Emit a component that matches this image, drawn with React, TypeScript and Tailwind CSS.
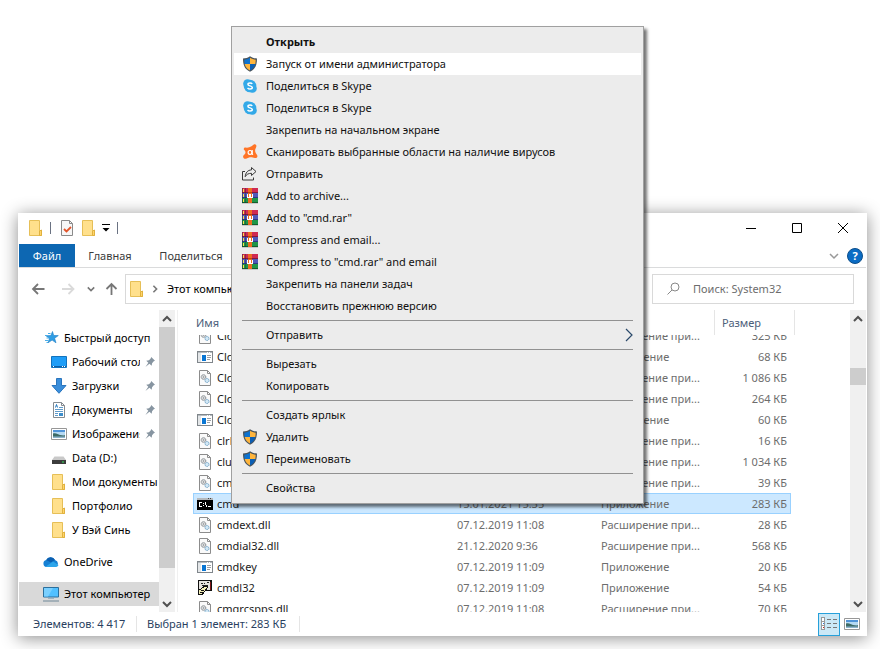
import React from 'react';
import clsx from 'clsx';

type IconProps = { className?: string };

const FolderIcon: React.FC<IconProps> = ({ className = 'w-4 h-4' }) => (
    <svg className={className} viewBox="0 0 16 16">
        <path d="M1.5.5h10v11h2v4h-12z" fill="#ffe08c" stroke="#e6bf57" />
        <path d="M11.5 15.5v-4.5l2-1v5.500z" fill="#ffd56b" stroke="#e0b13e" />
    </svg>
);

const CheckDocIcon = () => (
    <svg className="w-4 h-4" viewBox="0 0 16 16">
        <path d="M2.5.5h8l3 3v12h-11z" fill="#f7f7f7" stroke="#8a8a8a" />
        <path d="M10.5.5v3h3" fill="none" stroke="#8a8a8a" />
        <path d="M5 9l2.500 2.500L12 7" fill="none" stroke="#e2552b" strokeWidth="1.800" />
    </svg>
);

const ShieldIcon = () => (
    <svg className="w-4 h-4" viewBox="0 0 16 16">
        <path d="M8 .3C6 1.800 3.500 2.400 1 2.500c0 6 1.200 10.500 7 13.200 5.800-2.700 7-7.200 7-13.200C12.500 2.400 10 1.800 8 .3z" fill="#4a545c" />
        <path d="M8 1.800C6.300 2.900 4.400 3.500 2.300 3.700c0 1.500.2 2.900.4 4.300H8z" fill="#0f73cf" />
        <path d="M8 1.800c1.700 1.100 3.600 1.700 5.700 1.900 0 1.500-.2 2.900-.4 4.300H8z" fill="#ffb53c" />
        <path d="M2.700 8c.7 3 2.200 5 5.300 6.400V8z" fill="#ffb53c" />
        <path d="M13.300 8c-.7 3-2.200 5-5.300 6.400V8z" fill="#0b5fb5" />
    </svg>
);

const SkypeIcon = () => (
    <svg className="w-4 h-4" viewBox="0 0 16 16">
        <circle cx="5.500" cy="5.500" r="4.300" fill="#33a9e8" />
        <circle cx="10.500" cy="10.500" r="4.300" fill="#33a9e8" />
        <circle cx="8" cy="8" r="6.300" fill="#33a9e8" />
        <path d="M10.200 6C9.700 5.100 9 4.900 8 4.900c-1.200 0-2.100.5-2.100 1.400 0 2.200 4.400.9 4.400 3.300 0 .9-.9 1.500-2.200 1.500-1.100 0-2-.4-2.500-1.200" fill="none" stroke="#fff" strokeWidth="1.500" />
    </svg>
);

const AvastIcon = () => (
    <svg className="w-4 h-4" viewBox="0 0 16 16">
        <path d="M5 3.800C6.500 3.400 8 3 9.500 2.200L11.800.6c1.600-.8 3 .4 2.500 2.200L13.200 5.500c-.2 1.300 0 2.500.7 3.700l1.300 2c.8 1.700-.6 3.200-2.300 2.800-1.900-.4-3-1-4.900-.8-1.500.2-2.500 1-3.900 1.500-2 .6-3.700-1.400-2.700-3.100.7-1.100 2-1.800 2.100-3.200C3.600 7.200 2.600 6.600 2 5.800 1.300 4.600 2.200 3.300 3.500 3.500z" fill="#ff7426" />
        <circle cx="8" cy="8.400" r="1.900" fill="none" stroke="#fff" strokeWidth="1.200" />
        <path d="M10.200 6v3.600c0 .7.400.9.900.8" fill="none" stroke="#fff" strokeWidth="1.100" />
    </svg>
);

const ShareIcon = () => (
    <svg className="w-4 h-4" viewBox="0 0 16 16" fill="none" stroke="#3a3a3a">
        <path d="M3 5.500H.5v8.500h11v-2.500" />
        <path d="M9.500 1.500l4.500 4-4.500 4V7.300C6.500 7.300 4.500 8.300 3.200 10.700 3.500 7 5.500 4 9.500 3.900z" strokeLinejoin="round" />
    </svg>
);

const RarIcon = () => (
    <svg className="w-4 h-4" viewBox="0 0 16 16" shapeRendering="crispEdges">
        <path d="M0 0h16v5H0z" fill="#cf2a52" />
        <path d="M0 5h16v5H0z" fill="#5058b8" />
        <path d="M0 10h16v5H0z" fill="#1f9648" />
        <path d="M0 4h16v1H0z" fill="#86183a" />
        <path d="M0 9h16v1H0z" fill="#2f3785" />
        <path d="M0 14h16v1H0z" fill="#12602c" />
        <path d="M0 0h1v15H0zM3 0h1v15H3z" fill="#1d2a3a" opacity=".4" />
        <path d="M1 1h1v3H1zM1 6h1v3H1zM1 11h1v3H1z" fill="#ffe24a" />
        <path d="M6 0h4v15H6z" fill="#ee6b20" />
        <path d="M6 4h4v1H6z" fill="#b94412" />
        <path d="M5 6h1v3h1V6h2v3h1V6h1v4H5z" fill="#fff" />
        <path d="M0 15h16v1H0z" fill="#c9c9c9" />
    </svg>
);

const StarIcon = () => (
    <svg className="w-4 h-4" viewBox="0 0 16 16">
        <path d="M9.500 1.500l1.200 4 4.600.1-3.700 2.700 1.400 4.500-3.900-2.700L5 12.800l1.500-4.300L3 5.700l4.900-.2z" fill="#2f9de4" stroke="#1b7cc4" strokeWidth=".6" />
        <path d="M5 3.500h2.500M2 5.500h2.500M3.500 8H6M2 10.500h3.500M3.500 12.500H5" stroke="#4aaee8" />
    </svg>
);

const DesktopIcon = () => (
    <svg className="w-4 h-4" viewBox="0 0 16 16">
        <path d="M.5 2.500h15v11H.5z" fill="#1e9df7" stroke="#1273bd" />
        <path d="M1 12.500h14" stroke="#0a5ea8" />
        <path d="M2 12.500h1M11 12.500h1M13 12.500h1" stroke="#fff" />
    </svg>
);

const DownloadIcon = () => (
    <svg className="w-4 h-4" viewBox="0 0 16 16">
        <path d="M5.500.5h5v7h4.500L8 15.300 1 7.500h4.500z" fill="#3a8edb" stroke="#2a75bd" />
    </svg>
);

const DocIcon = () => (
    <svg className="w-4 h-4" viewBox="0 0 16 16">
        <path d="M2.500.5h8l3 3v12h-11z" fill="#fff" stroke="#858b91" />
        <path d="M10.500.5v3h3" fill="none" stroke="#858b91" />
        <path d="M8 5.500h4M4 7.500h8M4 9.500h8M4 11.500h3M4 13.500h3" stroke="#5f9bcb" />
        <path d="M4.500 5.500l1-3 1 3" fill="none" stroke="#1c74bd" />
        <path d="M8 11h4v3H8z" fill="#3b8dcb" />
    </svg>
);

const PictureIcon = () => (
    <svg className="w-4 h-4" viewBox="0 0 16 16">
        <path d="M.5 2.500h15v11H.5z" fill="#fff" stroke="#979797" />
        <path d="M2 4h12v8H2z" fill="#b5d9f3" />
        <path d="M2 4h12v2H2z" fill="#4f93d8" />
        <path d="M2 7.500c3-1 5 1 7 1.500s4 .5 5 .3V11H2z" fill="#3d6b66" />
        <path d="M2 10.500h12V12H2z" fill="#8db3cc" />
    </svg>
);

const DriveIcon = () => (
    <svg className="w-4 h-4" viewBox="0 0 16 16">
        <path d="M3.500 6.500h9l2.500 3.500H1z" fill="#c9c9c9" />
        <path d="M1 10h14v4H1z" fill="#3c3c3c" />
        <path d="M11 11.500h2v1h-2z" fill="#32e05a" />
    </svg>
);

const CloudIcon = () => (
    <svg className="w-4 h-4" viewBox="0 0 16 16">
        <path d="M3.500 13a3.500 3.500 0 0 1-.3-6.900A4.900 4.900 0 0 1 12 5.900 3.700 3.700 0 0 1 12.500 13z" fill="#1580d4" />
        <path d="M3.200 6.100A4.900 4.900 0 0 1 12 5.900L8 8.500z" fill="#0b5fb0" />
        <path d="M2.500 12.800L10 7.500l5.500 3.500c-.5 1.300-1.500 2-3 2h-9z" fill="#2ca5ea" />
    </svg>
);

const ComputerIcon = () => (
    <svg className="w-4 h-4" viewBox="0 0 16 16">
        <path d="M.5 1.500h15v9.500H.5z" fill="#52c0ff" stroke="#2c6f9c" />
        <path d="M1 2h9l-5 8.500H1z" fill="#7ad0ff" />
        <path d="M5 12.500h6" stroke="#9fb4c2" />
        <path d="M0 15h16" stroke="#6f8797" />
    </svg>
);

const PinIcon = () => (
    <svg className="w-2.5 h-2.5 shrink-0" viewBox="0 0 12 12">
        <path d="M7.500 0L12 4.500l-1.500.6L8.500 7.400 8 10.500 5.300 8.200.5 12l3.500-5-2.500-2.500 3.300-.6L6.800 1.800z" fill="#8795a1" />
    </svg>
);

const DllIcon = () => (
    <svg className="w-4 h-4" viewBox="0 0 16 16">
        <path d="M2.500.5h8l3 3v12h-11z" fill="#fafafa" stroke="#8c8c8c" />
        <path d="M10.500.5v3h3" fill="none" stroke="#8c8c8c" />
        <circle cx="6.500" cy="7" r="2.300" fill="#e4e4e4" stroke="#82898e" strokeDasharray="1.600 .3" />
        <circle cx="6.500" cy="7" r=".8" fill="#82898e" />
        <circle cx="10" cy="10.500" r="2" fill="#d3e8f5" stroke="#74a5c8" strokeDasharray="1.600 .3" />
    </svg>
);

const ExeIcon = () => (
    <svg className="w-4 h-4" viewBox="0 0 16 16" shapeRendering="crispEdges">
        <path d="M.5 2.500h15v11H.5z" fill="#fff" stroke="#80868b" />
        <path d="M1 3h14v1H1z" fill="#b6bcc1" />
        <path d="M10 3h1v1h-1zM12 3h1v1h-1z" fill="#fff" />
        <path d="M1 4h3v9H1z" fill="#e3e6e8" />
        <path d="M5 6h4v6H5z" fill="#0a76d3" />
        <path d="M10 6h4v1h-4zM10 8h4v1h-4zM10 10h3v1h-3z" fill="#9aa0a5" />
    </svg>
);

const ConsoleIcon = () => (
    <svg className="w-4 h-4" viewBox="0 0 16 16" shapeRendering="crispEdges">
        <path d="M0 2h16v12H0z" fill="#000" />
        <path d="M0 2h16v2H0z" fill="#b4b8bb" />
        <path d="M11 2h1v1h-1zM13 2h1v1h-1z" fill="#444" />
        <path d="M2 6h3v1H3v3h2v1H2zM6 7h1v1H6zM6 9h1v1H6zM8 6h1v3h1v2H9V9H8zM11 10h3v1h-3z" fill="#fff" />
    </svg>
);

const CmdlIcon = () => (
    <svg className="w-4 h-4" viewBox="0 0 16 16" shapeRendering="crispEdges">
        <path d="M1 0h14v11H1z" fill="#111" />
        <path d="M2 1h11v9H2z" fill="#e4e2dd" />
        <path d="M13 2h1v8h-1z" fill="#7d1216" />
        <path d="M4 3h2v1H4zM7 3h1v1H7zM10 2h2v1h-2zM5 5h6v1H5z" fill="#222" />
        <path d="M1 9l3 0 4-3 3 1-3 4-3 4-4-1z" fill="#f2eeb7" stroke="#111" />
        <path d="M4 10h3v1H4zM3 12h3v1H3z" fill="#111" />
    </svg>
);

const Chevron: React.FC<{ dir: 'up' | 'down' | 'right'; className?: string; stroke?: number }> = ({ dir, className = 'w-2.5 h-2.5 text-[#505050]', stroke = 2 }) => {
    const paths = { up: 'M1 7l4-4 4 4', down: 'M1 3l4 4 4-4', right: 'M3 1l4 4-4 4' };
    return (
        <svg className={className} viewBox="0 0 10 10" fill="none" stroke="currentColor" strokeWidth={stroke}>
            <path d={paths[dir]} />
        </svg>
    );
};

interface MenuEntry {
    label: string;
    icon?: React.FC;
    bold?: boolean;
    active?: boolean;
    submenu?: boolean;
}

const menuGroups: MenuEntry[][] = [
    [
        { label: 'Открыть', bold: true },
        { label: 'Запуск от имени администратора', icon: ShieldIcon, active: true },
        { label: 'Поделиться в Skype', icon: SkypeIcon },
        { label: 'Поделиться в Skype', icon: SkypeIcon },
        { label: 'Закрепить на начальном экране' },
        { label: 'Сканировать выбранные области на наличие вирусов', icon: AvastIcon },
        { label: 'Отправить', icon: ShareIcon },
        { label: 'Add to archive...', icon: RarIcon },
        { label: 'Add to "cmd.rar"', icon: RarIcon },
        { label: 'Compress and email...', icon: RarIcon },
        { label: 'Compress to "cmd.rar" and email', icon: RarIcon },
        { label: 'Закрепить на панели задач' },
        { label: 'Восстановить прежнюю версию' },
    ],
    [{ label: 'Отправить', submenu: true }],
    [{ label: 'Вырезать' }, { label: 'Копировать' }],
    [
        { label: 'Создать ярлык' },
        { label: 'Удалить', icon: ShieldIcon },
        { label: 'Переименовать', icon: ShieldIcon },
    ],
    [{ label: 'Свойства' }],
];

const quickAccess = [
    { label: 'Рабочий стол', icon: DesktopIcon, pinned: true },
    { label: 'Загрузки', icon: DownloadIcon, pinned: true },
    { label: 'Документы', icon: DocIcon, pinned: true },
    { label: 'Изображения', icon: PictureIcon, pinned: true },
    { label: 'Data (D:)', icon: DriveIcon },
    { label: 'Мои документы', icon: FolderIcon },
    { label: 'Портфолио', icon: FolderIcon },
    { label: 'У Вэй Синь', icon: FolderIcon },
];

const DLL = 'Расширение при...';
const APP = 'Приложение';

const files = [
    { name: 'CloudExperienceHost.dll', icon: DllIcon, date: '07.12.2019 11:08', type: DLL, size: '325 КБ' },
    { name: 'CloudExperienceHostBroker', icon: ExeIcon, date: '07.12.2019 11:08', type: APP, size: '68 КБ' },
    { name: 'CloudExperienceHostCommon.dll', icon: DllIcon, date: '21.12.2020 9:36', type: DLL, size: '1 086 КБ' },
    { name: 'CloudExperienceHostUser.dll', icon: DllIcon, date: '07.12.2019 11:08', type: DLL, size: '264 КБ' },
    { name: 'CloudNotifications', icon: ExeIcon, date: '07.12.2019 11:08', type: APP, size: '60 КБ' },
    { name: 'clrhost.dll', icon: DllIcon, date: '07.12.2019 11:08', type: DLL, size: '16 КБ' },
    { name: 'clusapi.dll', icon: DllIcon, date: '21.12.2020 9:36', type: DLL, size: '1 034 КБ' },
    { name: 'cmcfg32.dll', icon: DllIcon, date: '07.12.2019 11:08', type: DLL, size: '39 КБ' },
    { name: 'cmd', icon: ConsoleIcon, date: '15.01.2021 15:35', type: APP, size: '283 КБ', selected: true },
    { name: 'cmdext.dll', icon: DllIcon, date: '07.12.2019 11:08', type: DLL, size: '28 КБ' },
    { name: 'cmdial32.dll', icon: DllIcon, date: '21.12.2020 9:36', type: DLL, size: '568 КБ' },
    { name: 'cmdkey', icon: ExeIcon, date: '07.12.2019 11:09', type: APP, size: '20 КБ' },
    { name: 'cmdl32', icon: CmdlIcon, date: '07.12.2019 11:09', type: APP, size: '54 КБ' },
    { name: 'cmgrcspps.dll', icon: DllIcon, date: '07.12.2019 11:08', type: DLL, size: '70 КБ' },
];

const TitleBar = () => (
    <header className="flex h-[31px] items-center pb-px pl-[9px]">
        <FolderIcon />
        <span className="ml-1.5 h-3 w-px bg-gray-500" />
        <button aria-label="Свойства" className="ml-2"><CheckDocIcon /></button>
        <button aria-label="Новая папка" className="ml-1.5"><FolderIcon /></button>
        <button aria-label="Настройка панели" className="ml-1">
            <svg className="h-2 w-2.5" viewBox="0 0 10 8"><path d="M1 0h8v1H1zM1.500 4h7L5 7.500z" fill="#000" /></svg>
        </button>
        <span className="ml-1.5 h-3 w-px bg-gray-500" />
        <div className="ml-auto flex h-full">
            <button aria-label="Свернуть" className="flex w-[46px] items-center justify-center">
                <svg className="h-2.5 w-2.5" viewBox="0 0 10 10"><path d="M0 5.500h10" stroke="#000" /></svg>
            </button>
            <button aria-label="Развернуть" className="flex w-[46px] items-center justify-center">
                <svg className="h-2.5 w-2.5" viewBox="0 0 10 10"><path d="M.5.5h9v9h-9z" fill="none" stroke="#000" /></svg>
            </button>
            <button aria-label="Закрыть" className="flex w-[46px] items-center justify-center">
                <svg className="h-2.5 w-2.5" viewBox="0 0 10 10"><path d="M0 0l10 10M10 0L0 10" stroke="#000" /></svg>
            </button>
        </div>
    </header>
);

const Ribbon = () => (
    <div className="flex h-6 items-center border-b border-[#dadbdc]">
        <button className="h-full w-14 bg-[#0d67b2] text-white">Файл</button>
        <button className="h-full w-[70px] text-[#3b3b3b]">Главная</button>
        <button className="h-full w-[92px] text-[#3b3b3b]">Поделиться</button>
        <div className="ml-auto flex items-center gap-2 pr-[3px]">
            <Chevron dir="down" stroke={1.5} className="h-2.5 w-2.5 text-[#999]" />
            <button aria-label="Справка" className="flex h-4 w-4 items-center justify-center rounded-full border border-[#0d4f8b] bg-[#0b6cc4] font-bold text-white">?</button>
        </div>
    </div>
);

const AddressBar = () => (
    <div className="flex h-[42px] items-center px-3 pb-px">
        <button aria-label="Назад">
            <svg className="h-4 w-4" viewBox="0 0 16 16" fill="none" stroke="#777" strokeWidth="1.800"><path d="M13.500 8H2M7 3L2 8l5 5" /></svg>
        </button>
        <button aria-label="Вперед" className="ml-3.5">
            <svg className="h-4 w-4" viewBox="0 0 16 16" fill="none" stroke="#dadada" strokeWidth="1.800"><path d="M1 8h11.500M7.500 3l5 5-5 5" /></svg>
        </button>
        <button aria-label="Последние" className="ml-2.5"><Chevron dir="down" className="h-2 w-2 text-[#777]" /></button>
        <button aria-label="Вверх" className="ml-2">
            <svg className="h-4 w-4" viewBox="0 0 16 16" fill="none" stroke="#777" strokeWidth="1.800"><path d="M8.500 14V3M3.500 8l5-5 5 5" /></svg>
        </button>
        <div className="ml-1.5 flex h-[30px] flex-1 items-center border border-[#d9d9d9] pl-[3px] text-black">
            <FolderIcon />
            <Chevron dir="right" className="mx-1.5 h-2 w-2 text-[#777]" />
            <button className="pl-0.5">Этот компьютер</button>
        </div>
        <label className="ml-2 flex h-[30px] w-[202px] items-center gap-3 border border-[#d9d9d9] pl-3.5">
            <svg className="h-3.5 w-3.5 shrink-0" viewBox="0 0 14 14" fill="none" stroke="#888"><circle cx="8" cy="5" r="4" /><path d="M5 8L.5 12.500" /></svg>
            <input type="search" aria-label="Поиск" placeholder="Поиск: System32" className="w-full min-w-0 bg-transparent outline-none placeholder:text-[#6d6d6d]" />
        </label>
    </div>
);

const Sidebar = () => (
    <nav className="flex w-[156px] shrink-0">
        <ul className="w-[140px] overflow-hidden pt-4 whitespace-nowrap text-black">
            <li className="flex h-6 items-center gap-[5px] pl-6"><StarIcon /><a href="#quick">Быстрый доступ</a></li>
            {quickAccess.map(({ label, icon: Icon, pinned }) => (
                <li key={label} className="flex h-6 items-center gap-[5px] pl-8">
                    <span className="shrink-0"><Icon /></span>
                    <a href="#folder" className={clsx('overflow-hidden', pinned && 'w-[68px]')}>{label}</a>
                    {pinned && <PinIcon />}
                </li>
            ))}
            <li className="mt-2 flex h-6 items-center gap-[5px] pl-6"><CloudIcon /><a href="#onedrive">OneDrive</a></li>
            <li className="mt-2 flex h-6 items-center gap-[5px] bg-[#d9d9d9] pl-6"><ComputerIcon /><a href="#computer">Этот компьютер</a></li>
        </ul>
        <div className="flex w-4 flex-col items-center bg-[#f0f0f0]">
            <span className="flex h-[17px] items-center"><Chevron dir="up" /></span>
            <span className="h-[241px] w-full bg-[#cdcdcd]" />
            <span className="mt-auto flex h-[17px] items-center"><Chevron dir="down" /></span>
        </div>
    </nav>
);

const FileList = () => (
    <table className="flex min-w-0 flex-1 flex-col overflow-hidden border-l border-[#f0f0f0] pl-[15px] text-left text-[#6d6d6d]">
        <thead className="block shrink-0">
            <tr className="grid h-[25px] grid-cols-[257px_144px_121px_80px] text-[#4c607a]">
                <th className="flex items-center border-r border-[#e5e5e5] pl-[3px] font-normal">Имя</th>
                <th className="flex items-center border-r border-[#e5e5e5] pl-[7px] font-normal">Дата изменения</th>
                <th className="flex items-center border-r border-[#e5e5e5] pl-[7px] font-normal">Тип</th>
                <th className="flex items-center border-r border-[#e5e5e5] pl-[7px] font-normal">Размер</th>
            </tr>
        </thead>
        <tbody className="block min-h-0 flex-1 overflow-hidden">
            {files.map(({ name, icon: Icon, date, type, size, selected }) => (
                <tr
                    key={name}
                    className={clsx(
                        'grid h-[21px] w-[598px] grid-cols-[256px_144px_120px_1fr] items-center border whitespace-nowrap first:-mt-2.5',
                        selected ? 'border-[#99d1ff] bg-[#cce8ff]' : 'border-transparent'
                    )}
                >
                    <td className="flex items-center gap-1 pl-[3px] text-[#1a1a1a]"><Icon />{name}</td>
                    <td className="pl-[7px]">{date}</td>
                    <td className="pl-[7px]">{type}</td>
                    <td className="pr-[3px] text-right">{size}</td>
                </tr>
            ))}
        </tbody>
    </table>
);

const StatusBar = () => (
    <footer className="flex h-6 items-center text-[#2a3f5f]">
        <span className="w-[118px] border-r border-[#e5e5e5] pl-3.5">Элементов: 4 417</span>
        <span className="w-[163px] border-r border-[#e5e5e5] pl-2.5">Выбран 1 элемент: 283 КБ</span>
        <div className="ml-auto flex items-center gap-1 pr-1.5">
            <button aria-label="Таблица" className="flex h-[23px] w-[22px] items-center justify-center border border-[#26a0da] bg-[#cbe8f6]">
                <svg className="h-4 w-4" viewBox="0 0 16 16" shapeRendering="crispEdges">
                    <path d="M.5 1.500h3v12h-3zM.5 5.500h3M.5 9.500h3" fill="#fff" stroke="#999" />
                    <path d="M6 3.500h4M12 3.500h4M6 7.500h4M12 7.500h4M6 11.500h4M12 11.500h4" stroke="#777" />
                    <path d="M1.500 7h1v1h-1z" fill="#2a7de1" />
                    <path d="M1.500 11h1v1h-1z" fill="#c22" />
                </svg>
            </button>
            <button aria-label="Крупные значки"><PictureIcon /></button>
        </div>
    </footer>
);

const ContextMenu = () => (
    <div role="menu" className="absolute top-[26px] left-[231px] w-[413px] border border-[#a0a0a0] bg-[#ececec] px-0.5 py-1 text-[#111] shadow-[3px_3px_3px_rgba(0,0,0,0.55)]">
        {menuGroups.map((group, i) => (
            <React.Fragment key={i}>
                {i > 0 && <hr className="mx-2 my-[3px] border-[#919191]" />}
                {group.map(({ label, icon: Icon, bold, active, submenu }, j) => (
                    <button
                        key={j}
                        role="menuitem"
                        className={clsx('flex h-[22px] w-full items-center gap-2 px-2 text-left', bold && 'font-bold', active && 'bg-white')}
                    >
                        <span className="w-4 shrink-0">{Icon && <Icon />}</span>
                        {label}
                        {submenu && (
                            <svg className="ml-auto h-3.5 w-2" viewBox="0 0 8 14" fill="none" stroke="#2b4a6b" strokeWidth="1.200"><path d="M1 1l6 6-6 6" /></svg>
                        )}
                    </button>
                ))}
            </React.Fragment>
        ))}
    </div>
);

const App: React.FC = () => (
    <main className="relative min-h-screen overflow-hidden bg-white pt-[213px] pr-[13px] pb-[13px] pl-[18px] font-['Noto_Sans','Open_Sans',sans-serif] text-[11px] leading-4">
        <section className="bg-white px-px shadow-[0_2px_16px_rgba(0,0,0,0.45)]">
            <TitleBar />
            <Ribbon />
            <AddressBar />
            <div className="flex h-[302px] gap-0.5">
                <Sidebar />
                <FileList />
                <div className="flex w-4 shrink-0 flex-col items-center bg-[#f0f0f0]">
                    <span className="flex h-[17px] items-center"><Chevron dir="up" /></span>
                    <span className="mt-[41px] h-[17px] w-full bg-[#cdcdcd]" />
                    <span className="mt-auto flex h-[17px] items-center"><Chevron dir="down" /></span>
                </div>
            </div>
            <StatusBar />
        </section>
        <ContextMenu />
    </main>
);

export default App;
